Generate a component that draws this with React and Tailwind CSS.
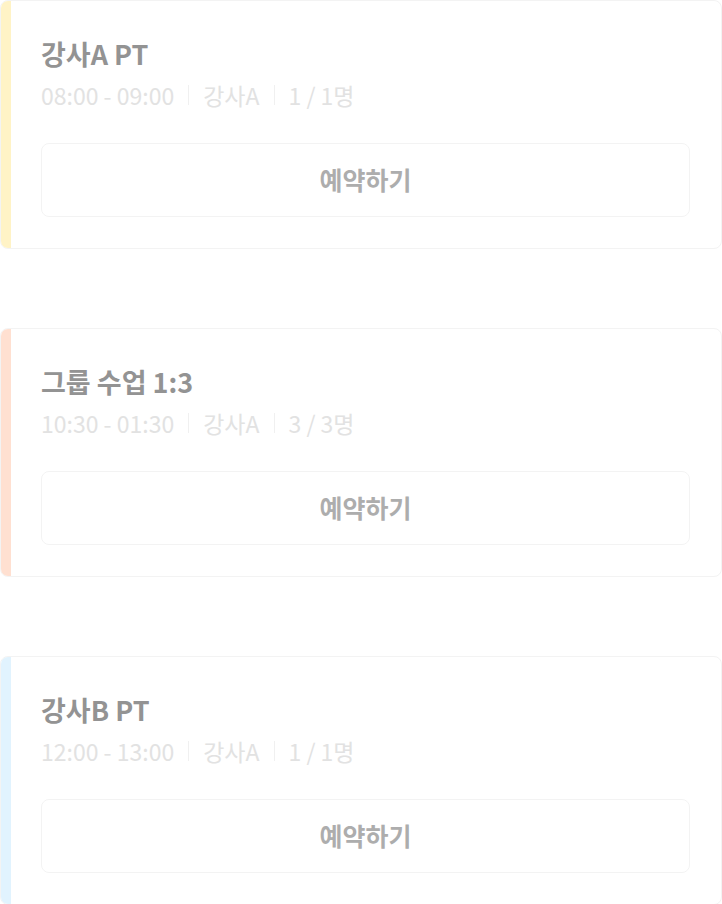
import React from 'react';

const classes = [
  { title: '강사A PT', time: '08:00 - 09:00', teacher: '강사A', count: '1 / 1명', bar: 'bg-[#fff3c6]' },
  { title: '그룹 수업 1:3', time: '10:30 - 01:30', teacher: '강사A', count: '3 / 3명', bar: 'bg-[#ffe0d1]' },
  { title: '강사B PT', time: '12:00 - 13:00', teacher: '강사A', count: '1 / 1명', bar: 'bg-[#e1f3fe]' },
];

const ClassCard = ({ item }) => {
  return (
    <div className="flex h-[249px] overflow-hidden rounded-lg border border-[#f3f3f3] bg-white">
      <div className={`w-[10px] shrink-0 ${item.bar}`} />
      <div className="flex flex-1 flex-col pl-[30px] pr-[31px] pt-[33px]">
        <h3 className="text-[27px] font-bold leading-[40px] text-[#939393]">
          {item.title}
        </h3>
        <div className="mt-[4px] flex items-center text-[23px] leading-[34px] text-[#e2e2e2]">
          <span>{item.time}</span>
          <span className="mx-[14px] h-[20px] w-px bg-[#f0f0f0]" />
          <span>{item.teacher}</span>
          <span className="mx-[14px] h-[20px] w-px bg-[#f0f0f0]" />
          <span>{item.count}</span>
        </div>
        <button className="mt-[31px] flex h-[74px] w-full items-center justify-center rounded-lg border border-[#f3f3f3] text-[25px] font-bold text-[#adadad]">
          예약하기
        </button>
      </div>
    </div>
  );
};

export default function App() {
  return (
    <div
      className="flex w-[722px] flex-col gap-[79px] bg-white"
      style={{ fontFamily: '"Noto Sans CJK KR", "Noto Sans", sans-serif' }}
    >
      {classes.map((item) => (
        <ClassCard key={item.title} item={item} />
      ))}
    </div>
  );
}
